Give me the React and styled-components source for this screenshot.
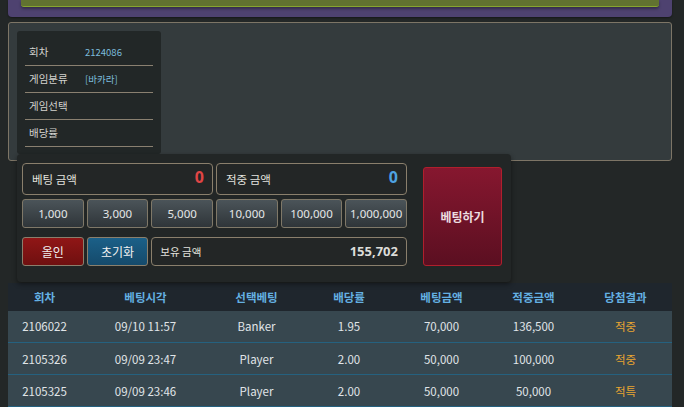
import React from "react";
import styled, { createGlobalStyle } from "styled-components";

const Global = createGlobalStyle`
  html, body { margin: 0; padding: 0; background: #232727; }
  body { font-family: "Noto Sans CJK KR", "Noto Sans", sans-serif; color: #dde2e4; }
  * { box-sizing: border-box; }
`;

const Page = styled.div`
  width: 684px;
  height: 407px;
  overflow: hidden;
  padding: 0 12px 0 8px;
  display: flex;
  flex-direction: column;
`;

const TopBar = styled.div`
  height: 18px;
  background: #4e4270;
  border-radius: 0 0 4px 4px;
  padding: 0 13px 0 13px;
  box-shadow: 0 1px 2px rgba(0,0,0,0.4);
`;

const GreenBar = styled.div`
  height: 7px;
  background: #617230;
  border-bottom: 1px solid #86a52f;
  border-radius: 0 0 3px 3px;
  box-shadow: 0 2px 3px rgba(0,0,0,0.35);
`;

const Panel = styled.div`
  margin-top: 5px;
  height: 139px;
  background: #343b3d;
  border: 1px solid #7d7566;
  border-radius: 3px;
  padding: 8px;
`;

const InfoCard = styled.div`
  width: 144px;
  height: 123px;
  background: #222727;
  border-radius: 3px;
  padding: 8px 8px 6px;
`;

const InfoRow = styled.div`
  height: 27px;
  display: flex;
  align-items: center;
  border-bottom: 1px solid #8a8070;
  padding-left: 4px;
`;

const InfoLabel = styled.span`
  width: 56px;
  font-size: 10.5px;
  color: #d2d2ce;
`;

const InfoValue = styled.span`
  font-size: 9.5px;
  color: #7cbbdb;
`;

const BetPanel = styled.div`
  position: relative;
  z-index: 1;
  margin: -7px 0 0 9px;
  width: 494px;
  height: 128px;
  background: #222626;
  border-radius: 4px;
  box-shadow: 0 2px 5px rgba(0,0,0,0.45);
  padding: 9px 9px 16px 5px;
  display: flex;
  gap: 16px;
`;

const LeftCol = styled.div`
  width: 385px;
  display: flex;
  flex-direction: column;
`;

const AmountRow = styled.div`
  display: grid;
  grid-template-columns: 1fr 1fr;
  gap: 3px;
  height: 32px;
`;

const Box = styled.div`
  background: #232626;
  border: 1px solid #8a7f6c;
  border-radius: 4px;
  display: flex;
  align-items: center;
  justify-content: space-between;
  padding: 0 8px 0 ${(p) => p.$pl || 9}px;
  grid-column: ${(p) => p.$span || "auto"};
`;

const BoxLabel = styled.span`
  font-size: ${(p) => p.$size || 11.5}px;
  color: #e2e2de;
`;

const BigValue = styled.span`
  font-family: "Noto Sans", sans-serif;
  font-size: 16px;
  font-weight: 700;
  color: ${(p) => p.$color};
  margin-top: -3px;
`;

const Balance = styled.span`
  font-family: "Noto Sans", sans-serif;
  font-size: 13px;
  font-weight: 700;
  color: #dcdcd8;
`;

const ButtonGrid = styled.div`
  display: grid;
  grid-template-columns: repeat(6, 1fr);
  gap: 3px;
  height: 29px;
  margin-top: ${(p) => p.$mt}px;
`;

const Chip = styled.button`
  font-family: "Noto Sans", sans-serif;
  font-size: 11.5px;
  color: #e4e6e7;
  background: linear-gradient(#4b5459, #2f3539);
  border: 1px solid #7f7868;
  border-radius: 3px;
  padding: 0;
  cursor: pointer;
`;

const ActionBtn = styled.button`
  font-family: "Noto Sans CJK KR", sans-serif;
  font-size: 12px;
  color: #f0f0f0;
  background: ${(p) => p.$bg};
  border: 1px solid #8a7f6c;
  border-radius: 3px;
  padding: 0;
  cursor: pointer;
`;

const BetButton = styled.button`
  margin-top: 4px;
  width: 79px;
  height: 99px;
  background: linear-gradient(#86172f, #5b0f21);
  border: 1px solid #b01f2c;
  border-radius: 3px;
  font-family: "Noto Sans CJK KR", sans-serif;
  font-size: 12px;
  font-weight: 700;
  color: #ecdde0;
  cursor: pointer;
`;

const Table = styled.table`
  margin-top: 1px;
  width: 664px;
  border-collapse: collapse;
  table-layout: fixed;
`;

const Th = styled.th`
  height: 28px;
  background: #1f262d;
  color: #64b0e2;
  font-size: 11.5px;
  font-weight: 700;
  text-align: center;
  padding: 0;
`;

const Td = styled.td`
  height: 32px;
  background: #37474f;
  border-bottom: 1px solid #25617f;
  color: ${(p) => p.$color || "#e0e5e8"};
  font-size: 11.5px;
  text-align: center;
  padding: 0;
`;

const cols = [73, 129, 93, 92, 93, 91, 93];
const headers = ["회차", "베팅시각", "선택베팅", "배당률", "베팅금액", "적중금액", "당첨결과"];
const rows = [
  ["2106022", "09/10 11:57", "Banker", "1.95", "70,000", "136,500", "적중"],
  ["2105326", "09/09 23:47", "Player", "2.00", "50,000", "100,000", "적중"],
  ["2105325", "09/09 23:46", "Player", "2.00", "50,000", "50,000", "적특"],
];

export default function App() {
  return (
    <>
      <Global />
      <Page>
        <TopBar>
          <GreenBar />
        </TopBar>
        <Panel>
          <InfoCard>
            <InfoRow>
              <InfoLabel>회차</InfoLabel>
              <InfoValue>2124086</InfoValue>
            </InfoRow>
            <InfoRow>
              <InfoLabel>게임분류</InfoLabel>
              <InfoValue>[바카라]</InfoValue>
            </InfoRow>
            <InfoRow>
              <InfoLabel>게임선택</InfoLabel>
            </InfoRow>
            <InfoRow>
              <InfoLabel>배당률</InfoLabel>
            </InfoRow>
          </InfoCard>
        </Panel>
        <BetPanel>
          <LeftCol>
            <AmountRow>
              <Box>
                <BoxLabel>베팅 금액</BoxLabel>
                <BigValue $color="#e04545">0</BigValue>
              </Box>
              <Box>
                <BoxLabel>적중 금액</BoxLabel>
                <BigValue $color="#4ea2e2">0</BigValue>
              </Box>
            </AmountRow>
            <ButtonGrid $mt={4}>
              {["1,000", "3,000", "5,000", "10,000", "100,000", "1,000,000"].map((v) => (
                <Chip key={v}>{v}</Chip>
              ))}
            </ButtonGrid>
            <ButtonGrid $mt={9}>
              <ActionBtn $bg="linear-gradient(#901616, #6f1010)">올인</ActionBtn>
              <ActionBtn $bg="linear-gradient(#1b6088, #154a6b)">초기화</ActionBtn>
              <Box $span="span 4" $pl={8}>
                <BoxLabel $size={10.5}>보유 금액</BoxLabel>
                <Balance>155,702</Balance>
              </Box>
            </ButtonGrid>
          </LeftCol>
          <BetButton>베팅하기</BetButton>
        </BetPanel>
        <Table>
          <colgroup>
            {cols.map((w, i) => (
              <col key={i} style={{ width: w }} />
            ))}
          </colgroup>
          <thead>
            <tr>
              {headers.map((h) => (
                <Th key={h}>{h}</Th>
              ))}
            </tr>
          </thead>
          <tbody>
            {rows.map((r) => (
              <tr key={r[0]}>
                {r.map((c, i) => (
                  <Td key={i} $color={i === 6 ? "#e8a531" : undefined}>{c}</Td>
                ))}
              </tr>
            ))}
          </tbody>
        </Table>
      </Page>
    </>
  );
}
